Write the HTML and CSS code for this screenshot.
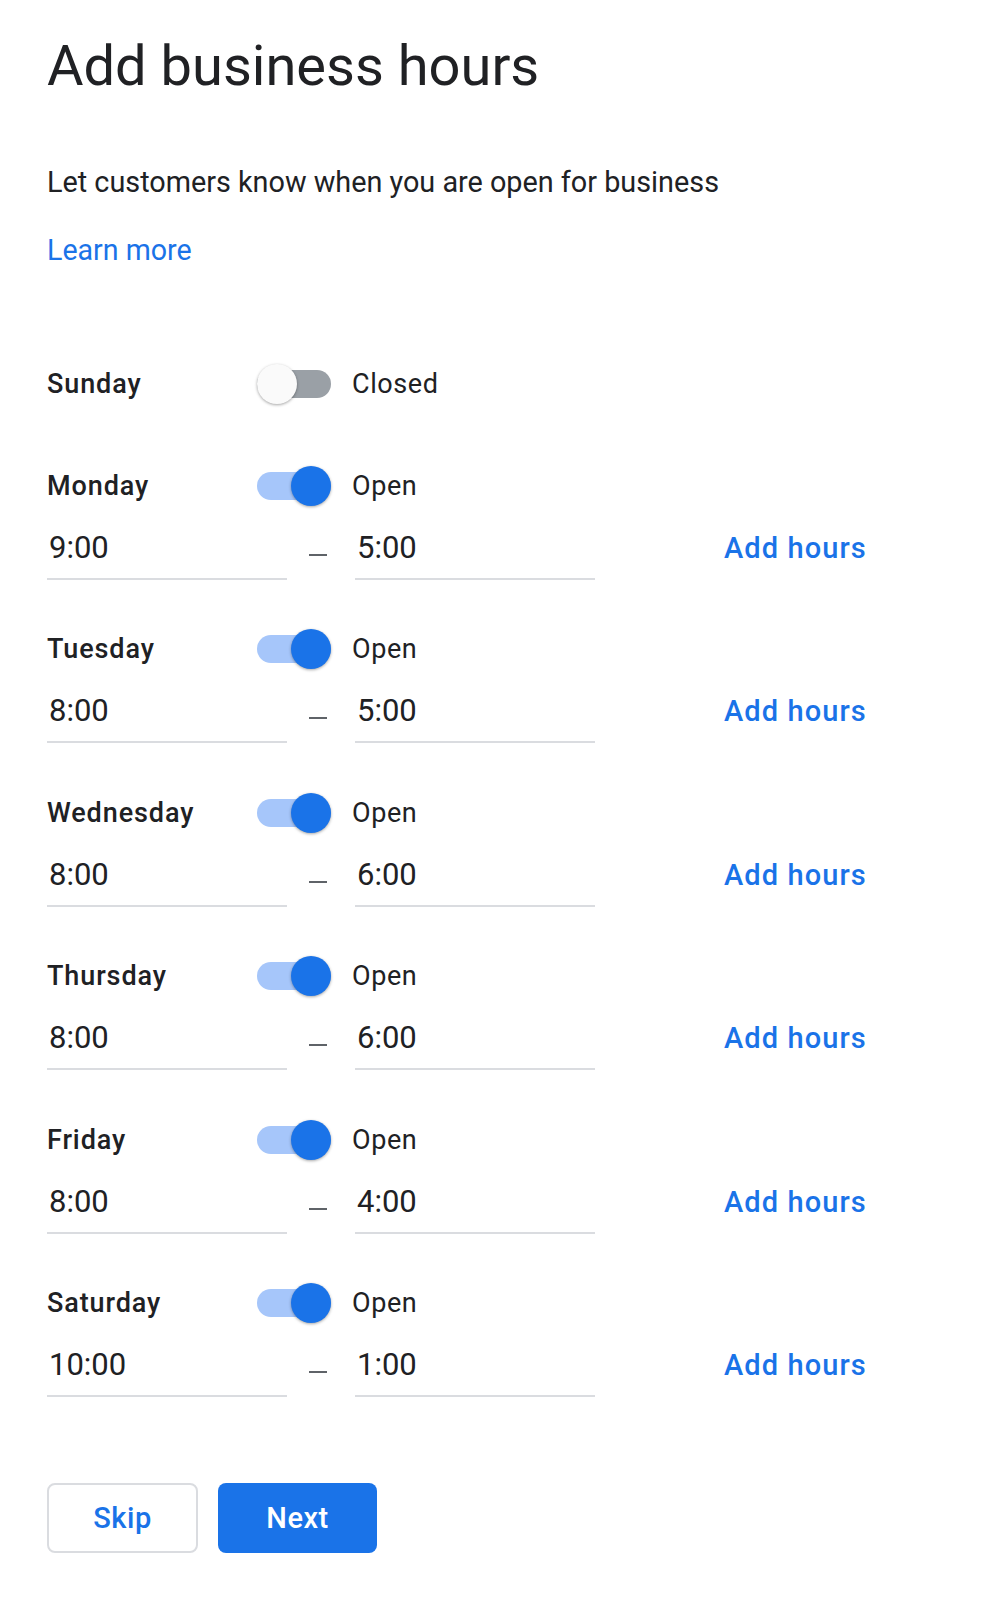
FILE: index.html
```html
<!DOCTYPE html>
<html lang="en">

<head>
  <meta charset="UTF-8">
  <meta name="viewport" content="width=device-width, initial-scale=1.0">
  <title>Add business hours</title>
  <link rel="stylesheet" href="styles.css">
</head>

<body>

  <main class="page">
    <h1 class="title">Add business hours</h1>
    <p class="subtitle">Let customers know when you are open for business</p>
    <a class="learn-more" href="#">Learn more</a>

    <!-- Week schedule -->
    <div class="schedule">

      <div class="day closed">
        <div class="day-head">
          <span class="day-name">Sunday</span>
          <span class="switch"><span class="knob"></span></span>
          <span class="status">Closed</span>
        </div>
      </div>

      <div class="day">
        <div class="day-head">
          <span class="day-name">Monday</span>
          <span class="switch on"><span class="knob"></span></span>
          <span class="status">Open</span>
        </div>
        <div class="times">
          <div class="field">9:00</div>
          <span class="dash"></span>
          <div class="field">5:00</div>
          <a class="add-hours" href="#">Add hours</a>
        </div>
      </div>

      <div class="day">
        <div class="day-head">
          <span class="day-name">Tuesday</span>
          <span class="switch on"><span class="knob"></span></span>
          <span class="status">Open</span>
        </div>
        <div class="times">
          <div class="field">8:00</div>
          <span class="dash"></span>
          <div class="field">5:00</div>
          <a class="add-hours" href="#">Add hours</a>
        </div>
      </div>

      <div class="day">
        <div class="day-head">
          <span class="day-name">Wednesday</span>
          <span class="switch on"><span class="knob"></span></span>
          <span class="status">Open</span>
        </div>
        <div class="times">
          <div class="field">8:00</div>
          <span class="dash"></span>
          <div class="field">6:00</div>
          <a class="add-hours" href="#">Add hours</a>
        </div>
      </div>

      <div class="day">
        <div class="day-head">
          <span class="day-name">Thursday</span>
          <span class="switch on"><span class="knob"></span></span>
          <span class="status">Open</span>
        </div>
        <div class="times">
          <div class="field">8:00</div>
          <span class="dash"></span>
          <div class="field">6:00</div>
          <a class="add-hours" href="#">Add hours</a>
        </div>
      </div>

      <div class="day">
        <div class="day-head">
          <span class="day-name">Friday</span>
          <span class="switch on"><span class="knob"></span></span>
          <span class="status">Open</span>
        </div>
        <div class="times">
          <div class="field">8:00</div>
          <span class="dash"></span>
          <div class="field">4:00</div>
          <a class="add-hours" href="#">Add hours</a>
        </div>
      </div>

      <div class="day">
        <div class="day-head">
          <span class="day-name">Saturday</span>
          <span class="switch on"><span class="knob"></span></span>
          <span class="status">Open</span>
        </div>
        <div class="times">
          <div class="field">10:00</div>
          <span class="dash"></span>
          <div class="field">1:00</div>
          <a class="add-hours" href="#">Add hours</a>
        </div>
      </div>

    </div>

    <!-- Footer actions -->
    <div class="actions">
      <button class="btn btn-outline">Skip</button>
      <button class="btn btn-primary">Next</button>
    </div>
  </main>

</body>

</html>
```

FILE: styles.css
```css
/* Reset */
* {
  margin: 0;
  padding: 0;
  box-sizing: border-box;
}

body {
  font-family: Roboto, "Liberation Sans", Arial, sans-serif;
  background: #fff;
  color: #202124;
  min-height: 1602px;
}

.page {
  padding: 34px 0 0 47px;
}

/* Heading block */
.title {
  font-size: 56px;
  font-weight: 400;
  line-height: 64px;
}

.subtitle {
  margin-top: 64px;
  font-size: 28.8px;
  line-height: 40px;
}

.learn-more {
  display: block;
  margin-top: 28px;
  font-size: 28.6px;
  line-height: 40px;
  color: #1a73e8;
  text-decoration: none;
}

/* Schedule */
.schedule {
  margin-top: 94px;
}

.day {
  margin-bottom: 49.4px;
}

.day.closed {
  margin-bottom: 62px;
}

.day-head {
  display: flex;
  align-items: center;
  height: 40px;
}

.day-name {
  width: 210px;
  font-size: 27px;
  font-weight: 500;
  line-height: 40px;
  letter-spacing: 0.9px;
}

.status {
  margin-left: 21px;
  font-size: 27px;
  line-height: 40px;
  letter-spacing: 0.6px;
}

/* Toggle switch */
.switch {
  position: relative;
  display: block;
  width: 74px;
  height: 28px;
  border-radius: 14px;
  background: #9aa0a6;
}

.switch .knob {
  position: absolute;
  top: -6px;
  left: 0;
  width: 40px;
  height: 40px;
  border-radius: 50%;
  background: #fafafa;
  box-shadow: 0 1px 3px rgba(0, 0, 0, 0.35);
}

.switch.on {
  background: #a6c6fa;
}

.switch.on .knob {
  left: auto;
  right: 0;
  background: #1a73e8;
}

/* Time inputs */
.times {
  display: flex;
  align-items: flex-start;
  margin-top: 22px;
}

.field {
  width: 240px;
  padding: 0 0 10px 2px;
  font-size: 31px;
  line-height: 40px;
  border-bottom: 2px solid #dadce0;
}

.dash {
  display: block;
  width: 18px;
  height: 2px;
  margin: 26px 28px 0 22px;
  background: #5f6368;
}

.add-hours {
  margin-left: 129px;
  font-size: 29px;
  font-weight: 500;
  line-height: 40px;
  letter-spacing: 1.1px;
  color: #1a73e8;
  text-decoration: none;
}

/* Buttons */
.actions {
  display: flex;
  gap: 20px;
  margin-top: 86px;
}

.btn {
  height: 70px;
  border-radius: 8px;
  font-family: Roboto, "Liberation Sans", Arial, sans-serif;
  font-size: 29px;
  font-weight: 500;
  letter-spacing: 0.5px;
  cursor: pointer;
}

.btn-outline {
  width: 151px;
  background: #fff;
  border: 2px solid #dadce0;
  color: #1a73e8;
}

.btn-primary {
  width: 159px;
  background: #1a73e8;
  border: none;
  color: #fff;
}
```
